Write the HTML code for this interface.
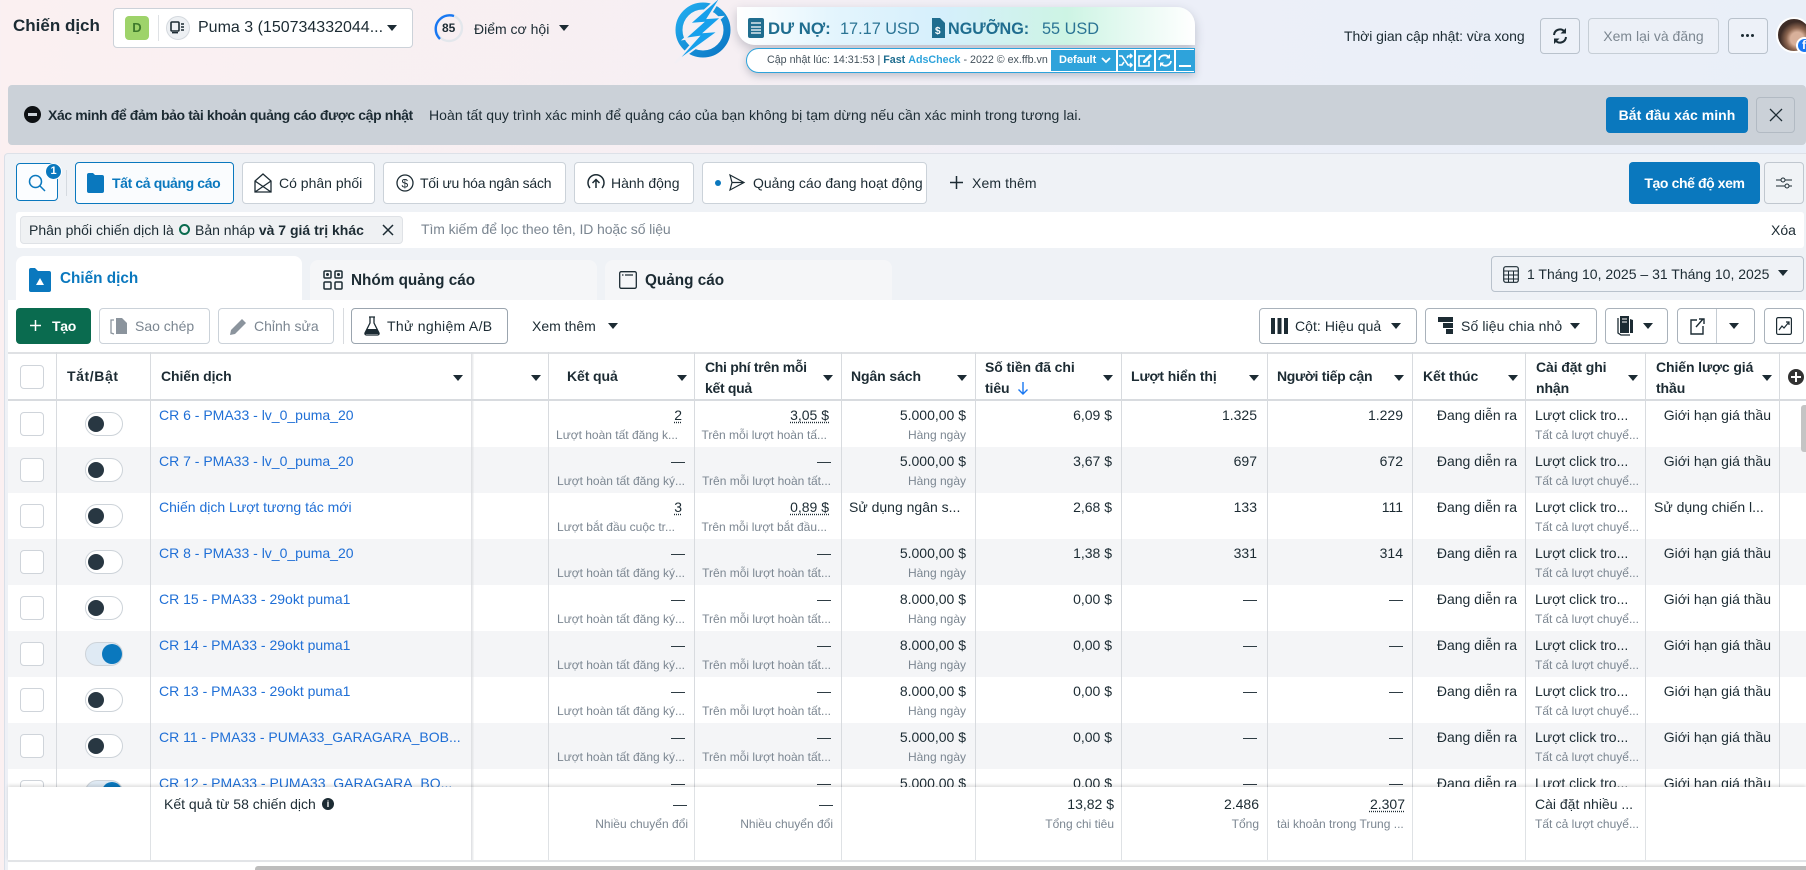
<!DOCTYPE html>
<html lang="vi"><head><meta charset="utf-8"><title>Chiến dịch</title>
<style>
*{box-sizing:border-box}
html,body{margin:0;padding:0}
body{width:1806px;height:870px;overflow:hidden;position:relative;font-family:"Liberation Sans",sans-serif;font-size:14px;color:#1c2b33;background:linear-gradient(90deg,#fbf0f1 0%,#f6eff3 40%,#eceff8 65%,#e9eff8 100%)}
.a{position:absolute}
.t{position:absolute;white-space:nowrap}
.btn{position:absolute;background:#fff;border:1px solid #cbd2d9;border-radius:4px}
.tri{position:absolute;width:0;height:0;border-left:5.500px solid transparent;border-right:5.500px solid transparent;border-top:6.500px solid #1c2b33}
.trs{position:absolute;width:0;height:0;border-left:5px solid transparent;border-right:5px solid transparent;border-top:6px solid #1c2b33}
svg{position:absolute;overflow:visible}
.r{position:absolute;left:8px;width:1798px;height:46px;background:#fff}
.g{background:#f4f5f7}
.r .cb{position:absolute;left:12px;top:11px;width:24px;height:24px;border:1px solid #cfd4da;border-radius:4px;background:#fff}
.r .tg{position:absolute;left:77px;top:11px;width:38px;height:24px;border:1px solid #cdd3d9;border-radius:12px;background:#fff}
.r .tg::after{content:"";position:absolute;left:2px;top:3px;width:16px;height:16px;border-radius:50%;background:#283742}
.r .on{background:#dfeaf4}
.r .on::after{left:16px;top:1px;width:20px;height:20px;background:#0a78be}
.n{position:absolute;left:151px;top:4px;line-height:20px;color:#1f6fd6;white-space:nowrap}
.v,.u{position:absolute;white-space:nowrap;text-align:right}
.v{top:4px;line-height:20px}
.u{top:26px;line-height:16px;font-size:12px;color:#7b8691}
.c1{right:1121px}.c2{right:975px}.c3{right:840px}.c4{right:694px}.c5{right:549px}.c6{right:403px}.c7{right:289px}.c8{left:1527px;text-align:left}.c9{right:35px}
.c1d{right:1124px}.c1s{right:1128px}
.c2u{right:979px}.c2d{right:977px}
.d{text-decoration:underline dotted;text-underline-offset:2px}
.ln{position:absolute;width:1px;background:#d8dbdf;z-index:3}
.h{position:absolute;font-weight:700;font-size:14px;line-height:21px;z-index:4;letter-spacing:-.1px}
.ft{position:absolute;left:8px;top:787px;width:1798px;height:75px;background:#fff;z-index:5;box-shadow:0 -2px 3px rgba(0,0,0,.12);border-bottom:2px solid #e2e4e7}
.ft .v{top:7px}.ft .u{top:29px}
.fl{position:absolute;top:0;bottom:0;width:1px;background:#dfe2e5}
</style></head><body>

<!-- top bar -->
<div class="t" style="left:13px;top:15px;font-size:17px;font-weight:700;line-height:22px">Chiến dịch</div>
<div class="btn" style="left:113px;top:8px;width:300px;height:40px;border-color:#ccd2d9"></div>
<div class="a" style="left:125px;top:16px;width:24px;height:24px;background:#9ed36a;border-radius:4px;text-align:center;line-height:24px;font-size:13px;font-weight:700;color:#3f7a2c">D</div>
<div class="a" style="left:158px;top:15px;width:1px;height:26px;background:#dfe2e5"></div>
<div class="a" style="left:166px;top:16px;width:24px;height:24px;border-radius:50%;background:#edf0f3;border:1px solid #d4d9de"></div>
<svg style="left:171px;top:22px" width="14" height="12" viewBox="0 0 14 12"><rect x="0" y="0" width="8" height="9" rx="1" fill="none" stroke="#1c2b33" stroke-width="1.600"/><rect x="1" y="10" width="6" height="1.400" fill="#1c2b33"/><path d="M10 2h3M10 5h3M10 8h3" stroke="#1c2b33" stroke-width="1.400"/></svg>
<div class="t" style="left:198px;top:19px;line-height:18px;font-size:16px">Puma 3 (150734332044...</div>
<i class="tri" style="left:387px;top:25px"></i>
<svg style="left:434px;top:13px" width="30" height="30" viewBox="0 0 30 30"><circle cx="15" cy="15" r="13" fill="none" stroke="#e3e7ec" stroke-width="2.400"/><path d="M20 3C10 0 0 8 2 19c.6 3 2 5 4 7" fill="none" stroke="#1877f2" stroke-width="2.400"/></svg>
<div class="t" style="left:442px;top:20px;font-size:12px;font-weight:700;line-height:16px">85</div>
<div class="t" style="left:474px;top:20px;line-height:18px;font-size:14px">Điểm cơ hội</div>
<i class="trs" style="left:559px;top:25px"></i>

<!-- extension widget -->
<div class="a" style="left:737px;top:7px;width:458px;height:38px;border-radius:0 18px 0 18px;background:linear-gradient(90deg,#fff 0%,#e4f5fd 20%,#d5effc 45%,#cdf4e4 72%,#fff 100%);box-shadow:0 4px 10px rgba(60,70,90,.28);z-index:1"></div>
<svg style="left:748px;top:18px;z-index:2" width="16" height="20" viewBox="0 0 16 20"><rect width="16" height="20" rx="2" fill="#1f6d8f"/><path d="M3 5h10M3 9h10M3 12h10M3 15h10" stroke="#fff" stroke-width="1.300"/></svg>
<div class="t" style="left:768px;top:18px;font-size:16.800px;font-weight:700;color:#1f6d8f;line-height:22px;z-index:2">DƯ NỢ:</div>
<div class="t" style="left:840px;top:18px;font-size:16.300px;color:#2b7494;line-height:22px;z-index:2">17.17 USD</div>
<svg style="left:931px;top:18px;z-index:2" width="14" height="20" viewBox="0 0 14 20"><path d="M1 0h8l5 5v15H1z" fill="#1f6d8f"/><text x="4" y="16" font-size="10" font-weight="700" fill="#fff" font-family="Liberation Sans">$</text></svg>
<div class="t" style="left:948px;top:18px;font-size:16.200px;font-weight:700;color:#1f6d8f;line-height:22px;z-index:2">NGƯỠNG:</div>
<div class="t" style="left:1042px;top:18px;font-size:16.300px;color:#2b7494;line-height:22px;z-index:2">55 USD</div>
<div class="a" style="left:746px;top:48px;width:449px;height:25px;border:1px solid #2ea3db;border-radius:13px 0 0 13px;background:#fff;box-shadow:0 3px 8px rgba(60,70,90,.28);z-index:1"></div>
<div class="t" style="left:767px;top:53px;font-size:10.700px;line-height:15px;color:#44525c;z-index:2">Cập nhật lúc: 14:31:53 | <b style="color:#1f6d8f">Fast</b> <b style="color:#2ea3db">AdsCheck</b> - 2022 © ex.ffb.vn</div>
<div class="a" style="left:1051px;top:50px;width:65px;height:21px;background:#2ea3db;color:#fff;font-size:11px;font-weight:700;line-height:21px;padding-left:8px;z-index:2">Default</div>
<svg style="left:1101px;top:57px;z-index:3" width="10" height="7" viewBox="0 0 10 7"><path d="M1 1l4 4 4-4" stroke="#fff" stroke-width="1.800" fill="none"/></svg>
<div class="a" style="left:1118px;top:50px;width:16px;height:21px;background:#2ea3db;z-index:2"></div>
<div class="a" style="left:1136px;top:50px;width:18px;height:21px;background:#2ea3db;z-index:2"></div>
<div class="a" style="left:1156px;top:50px;width:18px;height:21px;background:#2ea3db;z-index:2"></div>
<div class="a" style="left:1176px;top:50px;width:18px;height:21px;background:#2ea3db;z-index:2"></div>
<svg style="left:1119px;top:54px;z-index:3" width="14" height="13" viewBox="0 0 14 13"><path d="M0 2h3l6 9h4M0 11h3l2-3M8 4l1-2h4M11 0l2 2-2 2M11 9l2 2-2 2" stroke="#fff" stroke-width="1.600" fill="none"/></svg>
<svg style="left:1138px;top:54px;z-index:3" width="14" height="13" viewBox="0 0 14 13"><path d="M7 2H1v10h10V7" stroke="#fff" stroke-width="1.600" fill="none"/><path d="M5 7l7-7 2 2-7 7H5z" fill="#fff"/></svg>
<svg style="left:1158px;top:54px;z-index:3" width="14" height="13" viewBox="0 0 14 13"><path d="M1 6a5.500 5 0 0 1 10-2.500M13 7a5.500 5 0 0 1-10 2.500" stroke="#fff" stroke-width="1.800" fill="none"/><path d="M12 0v4.500H8zM2 13V8.500h4z" fill="#fff"/></svg>
<div class="a" style="left:1179px;top:65px;width:12px;height:2px;background:#fff;z-index:3"></div>

<!-- logo -->
<svg style="left:673px;top:0;z-index:2" width="58" height="64" viewBox="0 0 58 64"><defs><linearGradient id="lg" x1="0" y1="0" x2="1" y2="1"><stop offset="0" stop-color="#22aef0"/><stop offset="1" stop-color="#0b76c4"/></linearGradient></defs><circle cx="30" cy="30" r="24" fill="none" stroke="url(#lg)" stroke-width="7"/><path d="M50-6L16 24l13-1-18 16 14-2L2 63l44-32-14 1 17-15-14 1z" fill="#16a0ec" stroke="#f3eff4" stroke-width="2"/></svg>

<!-- top right -->
<div class="t" style="left:1344px;top:27px;line-height:18px;font-size:14px;letter-spacing:-.08px">Thời gian cập nhật: vừa xong</div>
<div class="btn" style="left:1540px;top:18px;width:40px;height:36px;background:#edf1f8;border-color:#b9c2cc"></div>
<svg style="left:1552px;top:28px" width="16" height="16" viewBox="0 0 16 16"><path d="M2 7a6 6 0 0 1 10.500-3.500M14 9a6 6 0 0 1-10.500 3.500" stroke="#1c2b33" stroke-width="2" fill="none"/><path d="M14 0v5.500H8.500zM2 16v-5.500h5.500z" fill="#1c2b33"/></svg>
<div class="btn" style="left:1588px;top:18px;width:131px;height:36px;background:#ecf0f7;border-color:#c6ced6;text-align:center;line-height:34px;color:#7c8791">Xem lại và đăng</div>
<div class="btn" style="left:1728px;top:18px;width:40px;height:36px;background:#edf1f8;border-color:#b9c2cc"></div>
<div class="a" style="left:1741px;top:34px;width:3px;height:3px;border-radius:50%;background:#1c2b33"></div>
<div class="a" style="left:1746px;top:34px;width:3px;height:3px;border-radius:50%;background:#1c2b33"></div>
<div class="a" style="left:1751px;top:34px;width:3px;height:3px;border-radius:50%;background:#1c2b33"></div>
<div class="a" style="left:1776px;top:17px;width:36px;height:36px;border-radius:50%;background:radial-gradient(circle at 60% 62%,#d8b09a 0 24%,#8d6650 40%,#3e2c26 62%);border:2px solid #fff"></div>
<div class="a" style="left:1796px;top:37px;width:17px;height:17px;border-radius:50%;background:#1877f2;border:2px solid #fff;color:#fff;font-size:12px;font-weight:700;line-height:13px;padding-left:4px">f</div>

<!-- banner -->
<div class="a" style="left:8px;top:85px;width:1798px;height:60px;background:#cbd1d8;border-radius:4px"></div>
<div class="a" style="left:24px;top:106px;width:17px;height:17px;border-radius:50%;background:#0e1114"></div>
<div class="a" style="left:28px;top:113px;width:9px;height:3px;background:#cbd1d8"></div>
<div class="t" style="left:48px;top:106px;font-weight:700;line-height:18px;font-size:14px;letter-spacing:-.38px">Xác minh để đảm bảo tài khoản quảng cáo được cập nhật</div>
<div class="t" style="left:429px;top:106px;line-height:18px;font-size:14px;letter-spacing:.05px">Hoàn tất quy trình xác minh để quảng cáo của bạn không bị tạm dừng nếu cần xác minh trong tương lai.</div>
<div class="a" style="left:1606px;top:97px;width:142px;height:36px;background:#0a78be;border-radius:4px;color:#fff;font-weight:700;text-align:center;line-height:36px;letter-spacing:.05px">Bắt đầu xác minh</div>
<div class="btn" style="left:1756px;top:97px;width:39px;height:36px;background:#cbd1d8;border-color:#b2bac3"></div>
<svg style="left:1769px;top:108px" width="14" height="14" viewBox="0 0 14 14"><path d="M1 1l12 12M13 1L1 13" stroke="#1c2b33" stroke-width="1.300"/></svg>

<!-- main panel -->
<div class="a" style="left:4px;top:153px;width:1802px;height:717px;background:linear-gradient(180deg,#eff2f6,#eef0f6);border-top:1px solid #dde1e8;border-left:1px solid #d9dfe8;border-radius:4px 0 0 0"></div>

<!-- filter tabs -->
<div class="btn" style="left:16px;top:163px;width:42px;height:38px;border-color:#0a78be;background:#fbfdff"></div>
<svg style="left:28px;top:174px" width="18" height="18" viewBox="0 0 18 18"><circle cx="7.500" cy="7.500" r="6" fill="none" stroke="#0a78be" stroke-width="1.500"/><path d="M12 12l5 5" stroke="#0a78be" stroke-width="1.500"/></svg>
<div class="a" style="left:45px;top:163px;width:17px;height:17px;border-radius:50%;background:#0a78be;border:1px solid #fff;color:#fff;font-size:11px;font-weight:700;text-align:center;line-height:15px">1</div>
<div class="a" style="left:66px;top:170px;width:1px;height:26px;background:#d5dae0"></div>
<div class="btn" style="left:75px;top:162px;width:159px;height:42px;border-color:#0a78be;background:#fafcfe"></div>
<svg style="left:87px;top:173px" width="17" height="20" viewBox="0 0 17 20"><path d="M0 2a2 2 0 0 1 2-2h4l2 2h7a2 2 0 0 1 2 2v14a2 2 0 0 1-2 2H2a2 2 0 0 1-2-2z" fill="#0a78be"/></svg>
<div class="t" style="left:112px;top:174px;font-weight:700;color:#0a78be;line-height:18px;letter-spacing:-.38px">Tất cả quảng cáo</div>

<div class="btn" style="left:242px;top:162px;width:133px;height:42px"></div>
<svg style="left:254px;top:173px" width="18" height="20" viewBox="0 0 18 20"><path d="M1 8l8-7 8 7v11H1zM1 8l16 11M17 8L1 19" fill="none" stroke="#1c2b33" stroke-width="1.300"/></svg>
<div class="t" style="left:279px;top:174px;line-height:18px">Có phân phối</div>

<div class="btn" style="left:383px;top:162px;width:183px;height:42px"></div>
<svg style="left:396px;top:174px" width="18" height="18" viewBox="0 0 18 18"><circle cx="9" cy="9" r="8" fill="none" stroke="#1c2b33" stroke-width="1.300"/><text x="5.500" y="13.500" font-size="12" fill="#1c2b33" font-family="Liberation Sans">$</text></svg>
<div class="t" style="left:420px;top:174px;line-height:18px;letter-spacing:-.25px">Tối ưu hóa ngân sách</div>

<div class="btn" style="left:574px;top:162px;width:120px;height:42px"></div>
<svg style="left:587px;top:174px" width="18" height="18" viewBox="0 0 18 18"><path d="M3 14a8 8 0 1 1 12 0" fill="none" stroke="#1c2b33" stroke-width="1.500"/><path d="M9 14V6M5.500 9L9 5.500 12.500 9" fill="none" stroke="#1c2b33" stroke-width="1.500"/></svg>
<div class="t" style="left:611px;top:174px;line-height:18px">Hành động</div>

<div class="btn" style="left:702px;top:162px;width:225px;height:42px"></div>
<div class="a" style="left:715px;top:180px;width:6px;height:6px;border-radius:50%;background:#0a78be"></div>
<svg style="left:729px;top:174px" width="16" height="17" viewBox="0 0 16 17"><path d="M1 1l14 7.500L1 16l2-7.500zM3 8.500h12" fill="none" stroke="#1c2b33" stroke-width="1.200"/></svg>
<div class="t" style="left:753px;top:174px;line-height:18px">Quảng cáo đang hoạt động</div>

<svg style="left:950px;top:176px" width="13" height="13" viewBox="0 0 13 13"><path d="M6.500 0v13M0 6.500h13" stroke="#1c2b33" stroke-width="1.500"/></svg>
<div class="t" style="left:972px;top:174px;line-height:18px;letter-spacing:.1px">Xem thêm</div>

<div class="a" style="left:1629px;top:162px;width:131px;height:42px;background:#0a78be;border-radius:4px;color:#fff;font-weight:700;text-align:center;line-height:42px;letter-spacing:-.4px">Tạo chế độ xem</div>
<div class="btn" style="left:1764px;top:162px;width:40px;height:42px;background:#f0f3f6;border-color:#c0c7cf"></div>
<svg style="left:1776px;top:176px" width="16" height="14" viewBox="0 0 16 14"><path d="M0 4h5M9 4h7M0 10h9M13 10h3" stroke="#1c2b33" stroke-width="1.100"/><circle cx="7" cy="4" r="2" fill="none" stroke="#1c2b33"/><circle cx="11" cy="10" r="2" fill="none" stroke="#1c2b33"/></svg>

<!-- filter row -->
<div class="a" style="left:16px;top:212px;width:1788px;height:36px;background:#fff;border-radius:3px"></div>
<div class="a" style="left:20px;top:216px;width:383px;height:28px;background:#eff1f3;border:1px solid #dfe2e6;border-radius:4px"></div>
<div class="t" style="left:29px;top:221px;line-height:18px">Phân phối chiến dịch là</div>
<div class="a" style="left:179px;top:224px;width:11px;height:11px;border-radius:50%;border:2px solid #0a6b4f"></div>
<div class="t" style="left:195px;top:221px;line-height:18px">Bản nháp <b>và 7 giá trị khác</b></div>
<svg style="left:382px;top:224px" width="12" height="12" viewBox="0 0 12 12"><path d="M1 1l10 10M11 1L1 11" stroke="#1c2b33" stroke-width="1.500"/></svg>
<div class="t" style="left:421px;top:220px;line-height:18px;color:#7b8691;letter-spacing:-.1px">Tìm kiếm để lọc theo tên, ID hoặc số liệu</div>
<div class="t" style="left:1771px;top:221px;line-height:18px">Xóa</div>

<!-- view tabs -->
<div class="a" style="left:16px;top:256px;width:286px;height:50px;background:#fff;border-radius:8px 8px 0 0"></div>
<svg style="left:29px;top:268px" width="22" height="24" viewBox="0 0 22 24"><path d="M0 2a2 2 0 0 1 2-2h4l3 3h11a2 2 0 0 1 2 2v17a2 2 0 0 1-2 2H2a2 2 0 0 1-2-2z" fill="#0a78be"/><path d="M11 10l4 7h-8z" fill="#fff"/></svg>
<div class="t" style="left:60px;top:268px;font-size:15.300px;font-weight:700;color:#0a78be;line-height:22px">Chiến dịch</div>
<div class="a" style="left:310px;top:260px;width:287px;height:42px;background:#f5f6f8;border-radius:8px 8px 0 0"></div>
<svg style="left:323px;top:270px" width="20" height="20" viewBox="0 0 20 20"><g fill="none" stroke="#1c2b33" stroke-width="1.500"><rect x="1" y="1" width="7" height="7" rx="1"/><rect x="12" y="1" width="7" height="7" rx="1"/><rect x="1" y="12" width="7" height="7" rx="1"/><rect x="12" y="12" width="7" height="7" rx="1"/></g><circle cx="4.500" cy="4.500" r="1.500" fill="#1c2b33"/><circle cx="15.500" cy="4.500" r="1.500" fill="#1c2b33"/></svg>
<div class="t" style="left:351px;top:270px;font-size:15.300px;font-weight:700;line-height:22px">Nhóm quảng cáo</div>
<div class="a" style="left:605px;top:260px;width:287px;height:42px;background:#f5f6f8;border-radius:8px 8px 0 0"></div>
<svg style="left:619px;top:271px" width="18" height="18" viewBox="0 0 18 18"><rect x=".7" y=".7" width="16.600" height="16.600" rx="1.500" fill="none" stroke="#1c2b33" stroke-width="1.300"/><path d="M3 4h1.500M6 4h8" stroke="#1c2b33" stroke-width="1.300"/></svg>
<div class="t" style="left:645px;top:270px;font-size:15.300px;font-weight:700;line-height:22px">Quảng cáo</div>
<div class="btn" style="left:1491px;top:256px;width:313px;height:36px;background:#eff2f6;border-color:#b9c2cc"></div>
<svg style="left:1503px;top:266px" width="16" height="17" viewBox="0 0 16 17"><rect x=".7" y=".7" width="14.600" height="15.600" rx="2" fill="none" stroke="#1c2b33" stroke-width="1.200"/><path d="M1 5h14M1 9h14M1 13h14M5.500 5v11M10.500 5v11" stroke="#1c2b33" stroke-width="1"/></svg>
<div class="t" style="left:1527px;top:265px;line-height:18px">1 Tháng 10, 2025 – 31 Tháng 10, 2025</div>
<i class="tri" style="left:1778px;top:270px"></i>

<!-- table bg -->
<div class="a" style="left:8px;top:300px;width:1798px;height:570px;background:#fff"></div>

<!-- toolbar -->
<div class="a" style="left:16px;top:308px;width:75px;height:36px;background:#0a6b4f;border-radius:4px"></div>
<svg style="left:30px;top:320px" width="11" height="11" viewBox="0 0 11 11"><path d="M5.500 0v11M0 5.500h11" stroke="#fff" stroke-width="1.500"/></svg>
<div class="t" style="left:52px;top:317px;color:#fff;font-weight:700;line-height:18px;letter-spacing:-.3px">Tạo</div>
<div class="btn" style="left:99px;top:308px;width:111px;height:36px"></div>
<svg style="left:110px;top:317px" width="17" height="18" viewBox="0 0 17 18"><path d="M6 1h6l5 5v11H6z" fill="#8b949d"/><path d="M4 3H1v13l3 1" fill="none" stroke="#8b949d" stroke-width="1.300"/></svg>
<div class="t" style="left:135px;top:317px;color:#7b8691;line-height:18px">Sao chép</div>
<div class="btn" style="left:218px;top:308px;width:116px;height:36px"></div>
<svg style="left:230px;top:318px" width="17" height="17" viewBox="0 0 17 17"><path d="M0 17l1-5L12 1l4 4L5 16z" fill="#8b949d"/></svg>
<div class="t" style="left:254px;top:317px;color:#7b8691;line-height:18px">Chỉnh sửa</div>
<div class="a" style="left:343px;top:308px;width:1px;height:36px;background:#d8dbdf"></div>
<div class="btn" style="left:351px;top:308px;width:157px;height:36px;border-color:#9ba5af"></div>
<svg style="left:364px;top:316px" width="16" height="20" viewBox="0 0 16 20"><path d="M5 1h6M6 1v6L1 17a1.500 1.500 0 0 0 1.500 2h11A1.500 1.500 0 0 0 15 17L10 7V1" fill="none" stroke="#1c2b33" stroke-width="1.300"/><path d="M3 13h10l2 5H1z" fill="#1c2b33"/></svg>
<div class="t" style="left:387px;top:317px;line-height:18px;letter-spacing:.3px">Thử nghiệm A/B</div>
<div class="t" style="left:532px;top:317px;line-height:18px">Xem thêm</div>
<i class="tri" style="left:608px;top:323px"></i>

<div class="btn" style="left:1259px;top:308px;width:158px;height:36px;border-color:#a9b2bb"></div>
<div class="a" style="left:1271px;top:318px;width:17px;height:16px;background:repeating-linear-gradient(90deg,#1c2b33 0 4px,transparent 4px 6.500px)"></div>
<div class="t" style="left:1295px;top:317px;line-height:18px;letter-spacing:.05px">Cột: Hiệu quả</div>
<i class="tri" style="left:1391px;top:323px"></i>
<div class="btn" style="left:1425px;top:308px;width:172px;height:36px;border-color:#a9b2bb"></div>
<svg style="left:1438px;top:317px" width="15" height="17" viewBox="0 0 15 17"><rect width="15" height="5" fill="#1c2b33"/><rect x="5" y="6" width="10" height="5" fill="#1c2b33"/><rect x="8" y="12" width="7" height="5" fill="#1c2b33"/></svg>
<div class="t" style="left:1461px;top:317px;line-height:18px;letter-spacing:.1px">Số liệu chia nhỏ</div>
<i class="tri" style="left:1570px;top:323px"></i>
<div class="btn" style="left:1605px;top:308px;width:63px;height:36px;border-color:#a9b2bb"></div>
<svg style="left:1617px;top:316px" width="17" height="20" viewBox="0 0 17 20"><path d="M3 0h9v17H3z" fill="#1c2b33"/><path d="M1 2v15l3 2h9" fill="none" stroke="#1c2b33" stroke-width="1.300"/><path d="M13 3l3 1v13h-3" fill="#1c2b33"/><path d="M5 3h5M5 6h5" stroke="#fff"/></svg>
<i class="tri" style="left:1643px;top:323px"></i>
<div class="btn" style="left:1677px;top:308px;width:78px;height:36px;border-color:#a9b2bb"></div>
<div class="a" style="left:1716px;top:309px;width:1px;height:34px;background:#c5ccd3"></div>
<svg style="left:1690px;top:318px" width="15" height="17" viewBox="0 0 15 17"><path d="M7 2H1v14h12V8" fill="none" stroke="#1c2b33" stroke-width="1.400"/><path d="M6 9l7-8M9 1h5v5" fill="none" stroke="#1c2b33" stroke-width="1.400"/></svg>
<i class="tri" style="left:1729px;top:323px"></i>
<div class="btn" style="left:1764px;top:308px;width:40px;height:36px;border-color:#a9b2bb"></div>
<svg style="left:1776px;top:317px" width="16" height="18" viewBox="0 0 16 18"><rect x=".6" y=".6" width="14.800" height="16.800" rx="1.500" fill="none" stroke="#1c2b33" stroke-width="1.200"/><path d="M3 13l3-4 2 2 5-6M10 5h3v3" fill="none" stroke="#1c2b33" stroke-width="1.200"/></svg>

<!-- header -->
<div class="a" style="left:8px;top:352px;width:1798px;height:2px;background:#dfe1e4;z-index:2"></div>
<div class="a" style="left:8px;top:399px;width:1798px;height:2px;background:#d8dbdf;z-index:6"></div>
<div class="a" style="left:20px;top:365px;width:24px;height:24px;border:1px solid #cfd4da;border-radius:4px;background:#fff"></div>
<div class="h" style="left:67px;top:366px;letter-spacing:.6px">Tắt/Bật</div>
<div class="h" style="left:161px;top:366px">Chiến dịch</div>
<i class="trs" style="left:453px;top:375px;z-index:4"></i>
<i class="trs" style="left:531px;top:375px;z-index:4"></i>
<div class="h" style="left:567px;top:366px">Kết quả</div>
<i class="trs" style="left:677px;top:375px;z-index:4"></i>
<div class="h" style="left:705px;top:357px;letter-spacing:-.3px">Chi phí trên mỗi<br>kết quả</div>
<i class="trs" style="left:823px;top:375px;z-index:4"></i>
<div class="h" style="left:851px;top:366px">Ngân sách</div>
<i class="trs" style="left:957px;top:375px;z-index:4"></i>
<div class="h" style="left:985px;top:357px">Số tiền đã chi<br>tiêu</div>
<svg style="left:1017px;top:381px;z-index:4" width="12" height="14" viewBox="0 0 12 14"><path d="M6 1v12M1.500 8.500L6 13l4.500-4.500" fill="none" stroke="#1877f2" stroke-width="1.400"/></svg>
<i class="trs" style="left:1103px;top:375px;z-index:4"></i>
<div class="h" style="left:1131px;top:366px">Lượt hiển thị</div>
<i class="trs" style="left:1249px;top:375px;z-index:4"></i>
<div class="h" style="left:1277px;top:366px;letter-spacing:-.3px">Người tiếp cận</div>
<i class="trs" style="left:1394px;top:375px;z-index:4"></i>
<div class="h" style="left:1423px;top:366px">Kết thúc</div>
<i class="trs" style="left:1508px;top:375px;z-index:4"></i>
<div class="h" style="left:1536px;top:357px">Cài đặt ghi<br>nhận</div>
<i class="trs" style="left:1628px;top:375px;z-index:4"></i>
<div class="h" style="left:1656px;top:357px">Chiến lược giá<br>thầu</div>
<i class="trs" style="left:1762px;top:375px;z-index:4"></i>
<div class="a" style="left:1788px;top:369px;width:16px;height:16px;border-radius:50%;background:#333;z-index:4"></div>
<svg style="left:1791px;top:372px;z-index:5" width="10" height="10" viewBox="0 0 10 10"><path d="M5 0v10M0 5h10" stroke="#fff" stroke-width="2"/></svg>

<!-- rows -->
<div class="r" style="top:401px"><i class="cb"></i><i class="tg"></i><span class="n">CR 6 - PMA33 - lv_0_puma_20</span><span class="v c1d d">2</span><span class="u c1s">Lượt hoàn tất đăng k...</span><span class="v c2d d">3,05 $</span><span class="u c2u">Trên mỗi lượt hoàn tấ...</span><span class="v c3">5.000,00 $</span><span class="u c3">Hàng ngày</span><span class="v c4">6,09 $</span><span class="v c5">1.325</span><span class="v c6">1.229</span><span class="v c7">Đang diễn ra</span><span class="v c8">Lượt click tro...</span><span class="u c8">Tất cả lượt chuyể...</span><span class="v c9">Giới hạn giá thầu</span></div>
<div class="r g" style="top:447px"><i class="cb"></i><i class="tg"></i><span class="n">CR 7 - PMA33 - lv_0_puma_20</span><span class="v c1">—</span><span class="u c1">Lượt hoàn tất đăng ký...</span><span class="v c2">—</span><span class="u c2">Trên mỗi lượt hoàn tất...</span><span class="v c3">5.000,00 $</span><span class="u c3">Hàng ngày</span><span class="v c4">3,67 $</span><span class="v c5">697</span><span class="v c6">672</span><span class="v c7">Đang diễn ra</span><span class="v c8">Lượt click tro...</span><span class="u c8">Tất cả lượt chuyể...</span><span class="v c9">Giới hạn giá thầu</span></div>
<div class="r" style="top:493px"><i class="cb"></i><i class="tg"></i><span class="n">Chiến dịch Lượt tương tác mới</span><span class="v c1d d">3</span><span class="u" style="right:1131px">Lượt bắt đầu cuộc tr...</span><span class="v c2d d">0,89 $</span><span class="u c2u">Trên mỗi lượt bắt đầu...</span><span class="v" style="left:841px">Sử dụng ngân s...</span><span class="v c4">2,68 $</span><span class="v c5">133</span><span class="v c6">111</span><span class="v c7">Đang diễn ra</span><span class="v c8">Lượt click tro...</span><span class="u c8">Tất cả lượt chuyể...</span><span class="v" style="left:1646px">Sử dụng chiến l...</span></div>
<div class="r g" style="top:539px"><i class="cb"></i><i class="tg"></i><span class="n">CR 8 - PMA33 - lv_0_puma_20</span><span class="v c1">—</span><span class="u c1">Lượt hoàn tất đăng ký...</span><span class="v c2">—</span><span class="u c2">Trên mỗi lượt hoàn tất...</span><span class="v c3">5.000,00 $</span><span class="u c3">Hàng ngày</span><span class="v c4">1,38 $</span><span class="v c5">331</span><span class="v c6">314</span><span class="v c7">Đang diễn ra</span><span class="v c8">Lượt click tro...</span><span class="u c8">Tất cả lượt chuyể...</span><span class="v c9">Giới hạn giá thầu</span></div>
<div class="r" style="top:585px"><i class="cb"></i><i class="tg"></i><span class="n">CR 15 - PMA33 - 29okt puma1</span><span class="v c1">—</span><span class="u c1">Lượt hoàn tất đăng ký...</span><span class="v c2">—</span><span class="u c2">Trên mỗi lượt hoàn tất...</span><span class="v c3">8.000,00 $</span><span class="u c3">Hàng ngày</span><span class="v c4">0,00 $</span><span class="v c5">—</span><span class="v c6">—</span><span class="v c7">Đang diễn ra</span><span class="v c8">Lượt click tro...</span><span class="u c8">Tất cả lượt chuyể...</span><span class="v c9">Giới hạn giá thầu</span></div>
<div class="r g" style="top:631px"><i class="cb"></i><i class="tg on"></i><span class="n">CR 14 - PMA33 - 29okt puma1</span><span class="v c1">—</span><span class="u c1">Lượt hoàn tất đăng ký...</span><span class="v c2">—</span><span class="u c2">Trên mỗi lượt hoàn tất...</span><span class="v c3">8.000,00 $</span><span class="u c3">Hàng ngày</span><span class="v c4">0,00 $</span><span class="v c5">—</span><span class="v c6">—</span><span class="v c7">Đang diễn ra</span><span class="v c8">Lượt click tro...</span><span class="u c8">Tất cả lượt chuyể...</span><span class="v c9">Giới hạn giá thầu</span></div>
<div class="r" style="top:677px"><i class="cb"></i><i class="tg"></i><span class="n">CR 13 - PMA33 - 29okt puma1</span><span class="v c1">—</span><span class="u c1">Lượt hoàn tất đăng ký...</span><span class="v c2">—</span><span class="u c2">Trên mỗi lượt hoàn tất...</span><span class="v c3">8.000,00 $</span><span class="u c3">Hàng ngày</span><span class="v c4">0,00 $</span><span class="v c5">—</span><span class="v c6">—</span><span class="v c7">Đang diễn ra</span><span class="v c8">Lượt click tro...</span><span class="u c8">Tất cả lượt chuyể...</span><span class="v c9">Giới hạn giá thầu</span></div>
<div class="r g" style="top:723px"><i class="cb"></i><i class="tg"></i><span class="n">CR 11 - PMA33 - PUMA33_GARAGARA_BOB...</span><span class="v c1">—</span><span class="u c1">Lượt hoàn tất đăng ký...</span><span class="v c2">—</span><span class="u c2">Trên mỗi lượt hoàn tất...</span><span class="v c3">5.000,00 $</span><span class="u c3">Hàng ngày</span><span class="v c4">0,00 $</span><span class="v c5">—</span><span class="v c6">—</span><span class="v c7">Đang diễn ra</span><span class="v c8">Lượt click tro...</span><span class="u c8">Tất cả lượt chuyể...</span><span class="v c9">Giới hạn giá thầu</span></div>
<div class="r" style="top:769px"><i class="cb"></i><i class="tg on"></i><span class="n">CR 12 - PMA33 - PUMA33_GARAGARA_BO...</span><span class="v c1">—</span><span class="v c2">—</span><span class="v c3">5.000,00 $</span><span class="v c4">0,00 $</span><span class="v c5">—</span><span class="v c6">—</span><span class="v c7">Đang diễn ra</span><span class="v c8">Lượt click tro...</span><span class="v c9">Giới hạn giá thầu</span></div>

<!-- column lines -->
<div class="ln" style="left:56px;top:352px;height:436px"></div>
<div class="ln" style="left:150px;top:352px;height:436px"></div>
<div class="ln" style="left:471px;top:352px;height:436px;width:3px;background:linear-gradient(90deg,#dcdee1,rgba(220,222,225,.15))"></div>
<div class="ln" style="left:548px;top:352px;height:436px"></div>
<div class="ln" style="left:694px;top:352px;height:436px"></div>
<div class="ln" style="left:841px;top:352px;height:436px"></div>
<div class="ln" style="left:975px;top:352px;height:436px"></div>
<div class="ln" style="left:1121px;top:352px;height:436px"></div>
<div class="ln" style="left:1267px;top:352px;height:436px"></div>
<div class="ln" style="left:1412px;top:352px;height:436px"></div>
<div class="ln" style="left:1525px;top:352px;height:436px"></div>
<div class="ln" style="left:1645px;top:352px;height:436px"></div>
<div class="ln" style="left:1779px;top:352px;height:436px"></div>

<!-- vertical scrollbar -->
<div class="a" style="left:1801px;top:405px;width:5px;height:47px;background:#c4c4c4;border-radius:3px 0 0 3px;z-index:6"></div>

<!-- footer -->
<div class="ft">
<i class="fl" style="left:142px"></i><i class="fl" style="left:463px;width:3px;background:linear-gradient(90deg,#dcdee1,rgba(220,222,225,.15))"></i><i class="fl" style="left:540px"></i><i class="fl" style="left:686px"></i><i class="fl" style="left:833px"></i><i class="fl" style="left:967px"></i><i class="fl" style="left:1113px"></i><i class="fl" style="left:1259px"></i><i class="fl" style="left:1404px"></i><i class="fl" style="left:1517px"></i><i class="fl" style="left:1637px"></i>
<span class="v" style="left:156px">Kết quả từ 58 chiến dịch</span>
<span class="a" style="left:314px;top:11px;width:12px;height:12px;border-radius:50%;background:#1c2b33;color:#fff;font-size:9px;font-weight:700;text-align:center;line-height:12px">i</span>
<span class="v" style="right:1119px">—</span><span class="u" style="right:1118px">Nhiều chuyển đổi</span>
<span class="v" style="right:973px">—</span><span class="u" style="right:973px">Nhiều chuyển đổi</span>
<span class="v" style="right:692px">13,82 $</span><span class="u" style="right:692px">Tổng chi tiêu</span>
<span class="v" style="right:547px">2.486</span><span class="u" style="right:547px">Tổng</span>
<span class="v d" style="right:401px">2.307</span><span class="u" style="left:1269px;text-align:left">tài khoản trong Trung ...</span>
<span class="v" style="left:1527px;text-align:left">Cài đặt nhiều ...</span><span class="u" style="left:1527px;text-align:left">Tất cả lượt chuyể...</span>
</div>

<!-- horizontal scrollbar -->
<div class="a" style="left:255px;top:866px;width:1551px;height:4px;background:#bdbdbd;border-radius:3px 0 0 0;z-index:6"></div>
</body></html>
